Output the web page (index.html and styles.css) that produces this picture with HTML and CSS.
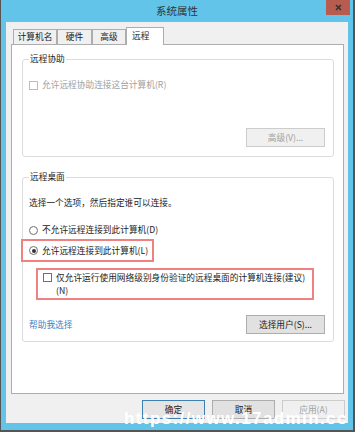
FILE: index.html
```html
<!DOCTYPE html>
<html lang="zh-CN">
<head>
    <meta charset="UTF-8">
    <meta name="viewport" content="width=device-width, initial-scale=1.0">
    <title>系统属性</title>
    <link rel="stylesheet" href="styles.css">
</head>
<body>
    <div class="window">
        <div class="titlebar">
            <span class="title">系统属性</span>
            <button class="close">
                <svg width="7" height="7" viewBox="0 0 7 7"><path d="M1 1L6 6M6 1L1 6" stroke="#333" stroke-width="1.6"/></svg>
            </button>
        </div>

        <div class="content">
            <div class="tabs">
                <div class="tab t1">计算机名</div>
                <div class="tab t2">硬件</div>
                <div class="tab t3">高级</div>
                <div class="tab active">远程</div>
            </div>

            <div class="panel">
                <fieldset class="group assist">
                    <legend>远程协助</legend>
                    <label class="check disabled">
                        <span class="box"></span>允许远程协助连接这台计算机(R)
                    </label>
                    <div class="btn-row">
                        <button class="btn disabled">高级(V)...</button>
                    </div>
                </fieldset>

                <fieldset class="group desktop">
                    <legend>远程桌面</legend>
                    <p class="hint">选择一个选项，然后指定谁可以连接。</p>
                    <label class="radio first">
                        <span class="dot"></span>不允许远程连接到此计算机(D)
                    </label>
                    <div class="mark mark-radio">
                        <label class="radio">
                            <span class="dot on"></span>允许远程连接到此计算机(L)
                        </label>
                    </div>
                    <div class="mark mark-check">
                        <label class="check multi">
                            <span class="box"></span>
                            <span>仅允许运行使用网络级别身份验证的远程桌面的计算机连接(建议)<br>(N)</span>
                        </label>
                    </div>
                    <div class="footer-row">
                        <a class="link" href="#">帮助我选择</a>
                        <button class="btn">选择用户(S)...</button>
                    </div>
                </fieldset>
            </div>

            <div class="actions">
                <button class="btn default">确定</button>
                <button class="btn">取消</button>
                <button class="btn disabled">应用(A)</button>
            </div>
        </div>
    </div>

    <div class="watermark">https://www.17admin.cc</div>
</body>
</html>
```

FILE: styles.css
```css
* {
    box-sizing: border-box;
}

body {
    margin: 0;
    position: relative;
    background: #fff;
    font-family: "Noto Sans CJK SC", sans-serif;
    font-size: 8.7px;
    color: #222;
}

.window {
    width: 355px;
    height: 432px;
    display: flex;
    flex-direction: column;
    background: #62c4e9;
    border-left: 1px solid #555;
    border-right: 2px solid #555;
    border-bottom: 2px solid #555;
}

.titlebar {
    height: 22px;
    display: grid;
    grid-template-columns: 1fr auto 1fr;
    align-items: start;
}

.title {
    grid-column: 2;
    font-size: 10.5px;
    line-height: 22px;
    color: #333;
}

.close {
    grid-column: 3;
    justify-self: end;
    width: 24px;
    height: 15px;
    margin-right: 3px;
    padding: 0;
    border: none;
    background: #b85c50;
    display: flex;
    align-items: center;
    justify-content: center;
}

.content {
    flex: 1;
    margin: 0 5px 7px;
    padding-top: 5px;
    background: #f0f0f0;
}

/* tabs */
.tabs {
    display: flex;
    align-items: flex-end;
    height: 17px;
    margin-left: 7px;
}

.tab {
    height: 15px;
    border: 1px solid #adadad;
    border-bottom: none;
    background: #f0f0f0;
    text-align: center;
    line-height: 13px;
}

.t1 { width: 44px; }
.t2 { width: 35px; }
.t3 { width: 34px; }

.tab.active {
    width: 38px;
    height: 18px;
    margin-bottom: -1px;
    position: relative;
    z-index: 1;
    background: #fff;
    text-align: left;
    padding-left: 5px;
    line-height: 15px;
}

.panel {
    width: 333px;
    height: 350px;
    margin-left: 5px;
    padding: 0 9px 0 10px;
    border: 1px solid #adadad;
    background: #fff;
}

/* group boxes */
.group {
    margin: 8px 0 0;
    padding: 14px 8px 9px 6px;
    border: 1px solid #dcdcdc;
    border-radius: 3px;
    min-width: 0;
}

.group legend {
    padding: 0 1px;
    line-height: 12px;
}

.group.desktop {
    margin-top: 14px;
    padding-bottom: 7px;
}

.check, .radio {
    display: flex;
    align-items: center;
    gap: 4px;
    height: 12px;
    line-height: 12px;
}

.check.disabled {
    color: #a0a0a0;
}

.box {
    width: 9px;
    height: 9px;
    flex: none;
    border: 1px solid #707070;
    background: #fff;
}

.disabled .box {
    border-color: #bcbcbc;
}

.dot {
    width: 9px;
    height: 9px;
    flex: none;
    border: 1px solid #707070;
    border-radius: 50%;
    background: #fff;
    display: flex;
    align-items: center;
    justify-content: center;
}

.dot.on::after {
    content: '';
    width: 4px;
    height: 4px;
    border-radius: 50%;
    background: #333;
}

.hint {
    margin: 0;
    height: 12px;
    line-height: 12px;
}

.radio.first {
    margin-top: 15px;
}

/* red annotation boxes */
.mark {
    border: 2px solid #ef8181;
    display: flex;
}

.mark-radio {
    margin: 3px 0 0 -8px;
    width: 133px;
    height: 23px;
    padding-left: 6px;
    align-items: center;
}

.mark-check {
    margin: 6px 0 0 7px;
    width: 278px;
    height: 32px;
    padding: 1px 0 1px 5px;
}

.check.multi {
    height: auto;
    align-items: flex-start;
    line-height: 13px;
    white-space: nowrap;
}

.check.multi .box {
    margin-top: 2px;
}

.btn-row {
    display: flex;
    justify-content: flex-end;
    margin-top: 37px;
}

.footer-row {
    display: flex;
    justify-content: space-between;
    align-items: center;
    margin-top: 15px;
}

.link {
    color: #3c80c6;
    text-decoration: none;
}

/* buttons */
.btn {
    width: 79px;
    height: 19px;
    padding: 0;
    border: 1px solid #adadad;
    background: #e1e1e1;
    font-family: inherit;
    font-size: 8.7px;
    line-height: 17px;
    color: #222;
}

.btn.disabled {
    border-color: #cccccc;
    background: #f0f0f0;
    color: #a0a0a0;
}

.btn.default {
    border-color: #3c7fb1;
    background: #e5e5e5;
}

.actions {
    display: flex;
    justify-content: flex-end;
    gap: 7px;
    margin-top: 6px;
    padding-right: 3px;
}

.actions .btn {
    width: 63px;
}

.watermark {
    position: absolute;
    left: 124px;
    top: 409px;
    color: #fff;
    font: bold 17px/20px "Liberation Sans", sans-serif;
    letter-spacing: 1.4px;
}
```
